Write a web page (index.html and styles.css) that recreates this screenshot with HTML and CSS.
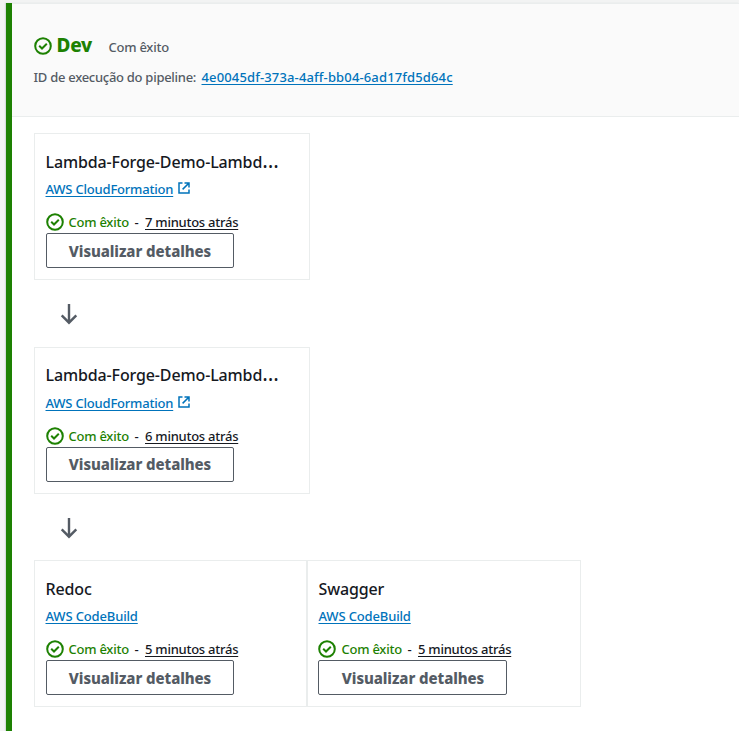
FILE: index.html
```
<!DOCTYPE html>
<html lang="pt">
<head>
<meta charset="utf-8">
<title>Pipeline</title>
<link rel="stylesheet" href="styles.css">
</head>
<body>
<svg class="defs" width="0" height="0">
  <symbol id="ok" viewBox="0 0 18 18"><circle cx="9" cy="9" r="7.8"/><path d="M5.2 8.8l2.8 2.7 4.8-4.7"/></symbol>
  <symbol id="ext" viewBox="0 0 12 12"><path d="M4.5 1H1v10h10V7.5M6.5 1H11v4.5M11 1L4.6 7.4"/></symbol>
  <symbol id="down" viewBox="0 0 18 22"><path d="M9 1v19M1.7 12.4L9 19.7l7.3-7.3"/></symbol>
</svg>
<main class="stage">
  <header class="stage-head">
    <div class="stage-title">
      <svg class="ok"><use href="#ok"/></svg>
      <h2>Dev</h2>
      <span class="state">Com êxito</span>
    </div>
    <div class="execution"><span class="label">ID de execução do pipeline:</span><a class="exec-id">4e0045df-373a-4aff-bb04-6ad17fd5d64c</a></div>
  </header>
  <section class="flow">
    <article class="card">
      <h3 class="name">Lambda-Forge-Demo-Lambd<span class="more">…</span></h3>
      <div class="provider"><a class="cf">AWS CloudFormation</a><svg class="ext"><use href="#ext"/></svg></div>
      <div class="status"><svg class="ok"><use href="#ok"/></svg><span class="success">Com êxito</span><span class="dash">-</span><a class="time">7 minutos atrás</a></div>
      <button><span>Visualizar detalhes</span></button>
    </article>
    <div class="arrow"><svg><use href="#down"/></svg></div>
    <article class="card middle">
      <h3 class="name">Lambda-Forge-Demo-Lambd<span class="more">…</span></h3>
      <div class="provider"><a class="cf">AWS CloudFormation</a><svg class="ext"><use href="#ext"/></svg></div>
      <div class="status"><svg class="ok"><use href="#ok"/></svg><span class="success">Com êxito</span><span class="dash">-</span><a class="time">6 minutos atrás</a></div>
      <button><span>Visualizar detalhes</span></button>
    </article>
    <div class="arrow second"><svg><use href="#down"/></svg></div>
    <div class="parallel">
      <article class="card">
        <h3 class="name">Redoc</h3>
        <div class="provider"><a class="cb">AWS CodeBuild</a></div>
        <div class="status"><svg class="ok"><use href="#ok"/></svg><span class="success">Com êxito</span><span class="dash">-</span><a class="time">5 minutos atrás</a></div>
        <button><span>Visualizar detalhes</span></button>
      </article>
      <article class="card">
        <h3 class="name">Swagger</h3>
        <div class="provider"><a class="cb">AWS CodeBuild</a></div>
        <div class="status"><svg class="ok"><use href="#ok"/></svg><span class="success">Com êxito</span><span class="dash">-</span><a class="time">5 minutos atrás</a></div>
        <button><span>Visualizar detalhes</span></button>
      </article>
    </div>
  </section>
</main>
</body>
</html>
```
FILE: styles.css
```
* { box-sizing: border-box; }
body {
  margin: 0;
  padding: 3px 0 0 6px;
  height: 731px;
  overflow: hidden;
  background: #f2f3f3;
  font: 500 13px/20px "Noto Sans", sans-serif;
  letter-spacing: -0.25px;
  color: #16191f;
}
.defs { display: block; position: absolute; }
svg { display: block; flex: none; fill: none; }
h2, h3 { margin: 0; }
a { text-decoration: underline; text-underline-offset: 2px; text-decoration-thickness: 1px; text-decoration-skip-ink: none; }
.stage {
  height: 728px;
  border-left: 6px solid #1d8102;
  background: #fff;
  box-shadow: -1px 0 1px #d5dbdb;
}
.stage-head {
  height: 114px;
  padding: 29px 0 0 21.5px;
  background: #fafafa;
  border-top: 1px solid #eaeded;
  border-bottom: 1px solid #eaeded;
  color: #545b64;
}
.stage-title { display: flex; height: 24px; }
.ok { width: 18px; height: 18px; stroke: #1d8102; stroke-width: 2; }
.stage-title .ok { margin: 4px 5px 0 0; }
.stage-title h2 { width: 52px; font-size: 19px; line-height: 24px; font-weight: 800; letter-spacing: -0.3px; color: #1d8102; }
.state { padding-top: 4px; }
.execution { display: flex; padding-top: 10px; }
.label { width: 168px; white-space: nowrap; letter-spacing: -0.28px; }
.exec-id { letter-spacing: 0.14px; }
.exec-id, .provider a { color: #0073bb; }
.flow { padding: 16px 0 0 22px; }
.card {
  width: 276px;
  height: 147px;
  padding: 16px 11px 0;
  border: 1px solid #eaeded;
}
.name { font-size: 16px; line-height: 24px; font-weight: 500; letter-spacing: -0.13px; white-space: nowrap; }
.more { font-weight: 400; letter-spacing: 0; font-size: 21px; line-height: 0; }
.provider { display: flex; height: 20px; margin-top: 5px; }
.name, .provider, .status { margin-left: -0.5px; }
.provider a { letter-spacing: -0.2px; }
.provider a.cb { letter-spacing: -0.15px; }
.ext { width: 12px; height: 12px; margin: 3px 0 0 5px; stroke: #0073bb; stroke-width: 1.5; }
.status { display: flex; height: 20px; margin-top: 13px; white-space: nowrap; }
.status .ok { margin: 1px 5px 0 0; }
.success { width: 66px; color: #1d8102; }
.dash { width: 10.5px; }
.time { letter-spacing: -0.25px; }
button {
  display: block;
  width: 188px;
  height: 35px;
  margin-top: 1px;
  padding: 1px 0 0;
  border: 1px solid #545b64;
  border-radius: 2px;
  background: #fff;
  color: #545b64;
  font: 800 15px/32px "Noto Sans", sans-serif;
  letter-spacing: -0.08px;
  white-space: nowrap;
}
.middle { padding-top: 15px; }
.middle .provider { margin-top: 6px; }
.middle button { padding: 0 0 1px; }
.arrow { height: 67px; padding: 23px 0 0 26px; }
.arrow.second { height: 66px; }
.arrow svg { width: 18px; height: 22px; stroke: #545b64; stroke-width: 2.4; }
.parallel { display: flex; }
.parallel .card { width: 274px; }
.parallel .card:first-child { border-right-width: 2px; }
.parallel .card + .card { margin-left: -1px; padding-left: 12px; border-left: 0; }
.parallel .card + .card .ok { margin-left: -1px; margin-right: 6px; }
.parallel .card + .card button { width: 189px; margin-left: -1px; padding-left: 1px; }
```
